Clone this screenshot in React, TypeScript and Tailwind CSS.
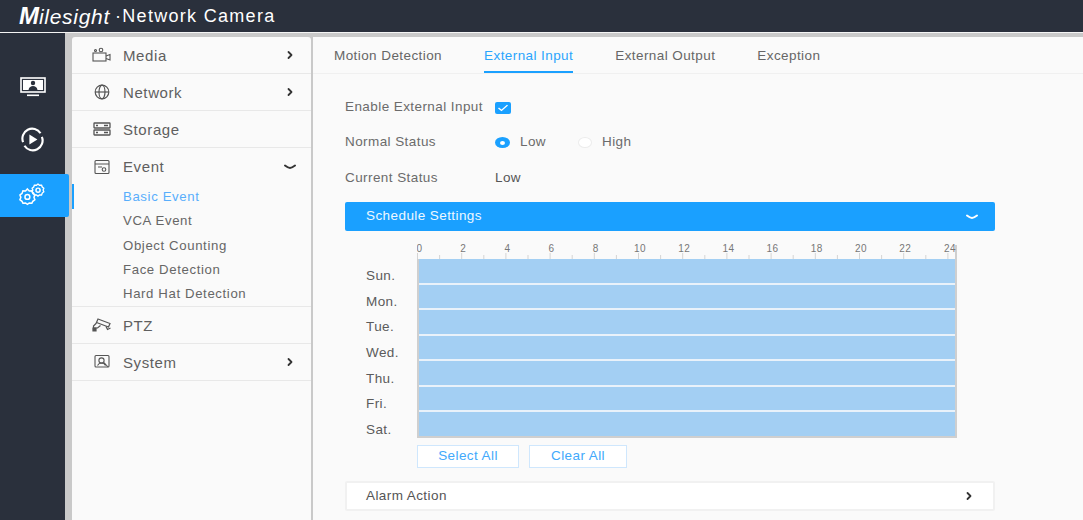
import { ChevronRight } from "lucide-react"

const font = "[font-family:'Liberation_Sans',Arial,sans-serif]"

function MediaIcon() {
  return (
    <svg width="20" height="16" viewBox="0 0 20 16" fill="none" stroke="#555" strokeWidth="1.1">
      <rect x="1" y="6" width="13" height="8" />
      <path d="M14 9l4-1.5V13l-4-1.5" />
      <circle cx="9" cy="3" r="1.8" />
      <circle cx="3.5" cy="3.5" r="1" />
    </svg>
  )
}

function GlobeIcon() {
  return (
    <svg width="18" height="18" viewBox="0 0 18 18" fill="none" stroke="#555" strokeWidth="1.2">
      <circle cx="9" cy="9" r="6.8" />
      <ellipse cx="9" cy="9" rx="3" ry="6.8" />
      <path d="M2 9h14" />
    </svg>
  )
}

function StorageIcon() {
  return (
    <svg width="18" height="14" viewBox="0 0 18 14" fill="none" stroke="#555" strokeWidth="1.3">
      <rect x="1" y="1" width="16" height="5" rx="0.5" />
      <rect x="1" y="8" width="16" height="5" rx="0.5" />
      <path d="M3 3.5h2M3 10.5h2M11 3.5h4M11 10.5h4" />
    </svg>
  )
}

function EventIcon() {
  return (
    <svg width="18" height="16" viewBox="0 0 18 16" fill="none" stroke="#555" strokeWidth="1.1">
      <rect x="2" y="1.5" width="14" height="13" rx="1" />
      <path d="M2 5h14M5 8h4" />
      <circle cx="11" cy="10.5" r="1.8" />
    </svg>
  )
}

function PtzIcon() {
  return (
    <svg width="20" height="14" viewBox="0 0 20 14" fill="none" stroke="#555" strokeWidth="1.2">
      <path d="M6 1L18 5.5 16.5 9 4.5 4.5z" />
      <path d="M14 8.5l1.5 3 3-1.5M4.5 5L1.5 8v4.5M1.5 10h4l3-2.5" />
      <path d="M1 10h3v3H1z" fill="#555" />
    </svg>
  )
}

function SystemIcon() {
  return (
    <svg width="18" height="16" viewBox="0 0 18 16" fill="none" stroke="#555" strokeWidth="1.1">
      <rect x="2" y="1.5" width="14" height="11.5" rx="1" />
      <circle cx="8.5" cy="6.5" r="2.6" />
      <path d="M4.5 11.5c1-2 3-2.5 4-2.5s3 .5 4 2.5M11 8.5l4 4.5" />
    </svg>
  )
}

function LiveIcon() {
  return (
    <svg width="26" height="20" viewBox="0 0 26 20" fill="none">
      <rect x="1" y="1" width="24" height="14" stroke="#fff" strokeWidth="1.6" />
      <rect x="3" y="3" width="20" height="10" fill="#fff" />
      <circle cx="13" cy="6" r="2.2" fill="#2a303c" />
      <path d="M8.5 13c.5-3 2.5-4 4.5-4s4 1 4.5 4z" fill="#2a303c" />
      <rect x="7" y="17.5" width="12" height="1.6" fill="#fff" />
    </svg>
  )
}

function PlaybackIcon() {
  return (
    <svg width="25" height="25" viewBox="0 0 28 28" fill="none" stroke="#fff" strokeWidth="2.4">
      <path d="M3.5 17A11 11 0 0 1 23 7M24.5 11A11 11 0 0 1 5 21" />
      <path d="M10.5 8.5l9 5.5-9 5.5z" fill="#fff" stroke="none" />
    </svg>
  )
}

function GearsIcon() {
  return (
    <svg width="28" height="25" viewBox="0 0 30 26" fill="none" stroke="#fff" strokeWidth="1.6">
      <path d="M9 9l2 2.2 2.8-.2 1 2.8 2.2 1.7-1 2.5 1 2.5-2.2 1.7-1 2-2.8-.2L9 25.5l-2-1.5-2.8.2-1-2-2.2-1.7 1-2.5-1-2.5 2.2-1.7 1-2.8 2.8.2z" transform="translate(0 -3)" />
      <circle cx="9" cy="14.5" r="2.6" />
      <path d="M21 1l1.8 1.4 2.4-.1.8 2.2 1.8 1.4-.8 2.1.8 2.1-1.8 1.4-.8 2.2-2.4-.1L21 15l-1.8-1.4-2.4.1-.8-2.2-1.8-1.4.8-2.1-.8-2.1 1.8-1.4.8-2.2 2.4.1z" transform="translate(1 -.2) scale(.92)" />
      <circle cx="20.4" cy="7.3" r="2.2" />
    </svg>
  )
}

// flat chevron used for the open sections
function OpenChevron({ color }: { color: string }) {
  return (
    <svg width="12" height="6" viewBox="0 0 12 6" fill="none" stroke={color} strokeWidth="2" strokeLinecap="round">
      <path d="M1 1.5c2 1.5 3.5 2.5 5 2.5s3-1 5-2.5" />
    </svg>
  )
}

function Ruler() {
  const hours = Array.from({ length: 25 }, (_, i) => i)
  return (
    <svg width="542" height="17" viewBox="0 0 542 17" className="block">
      {hours.map((h) => (
        <line key={h} x1={h * 22.1 + 0.5} x2={h * 22.1 + 0.5} y1={h % 2 === 0 ? 11 : 13} y2="17" stroke="#d4d4d4" />
      ))}
      <line x1="539" x2="539" y1="3" y2="17" stroke="#cfcfcf" strokeWidth="2" />
      {hours
        .filter((h) => h % 2 === 0)
        .map((h) => (
          <text key={h} x={h === 0 ? 2.5 : h === 24 ? 533 : h * 22.1 + 2} y="9.5" fontSize="10" fill="#777" textAnchor="middle" fontFamily="Liberation Sans">
            {h}
          </text>
        ))}
    </svg>
  )
}

const days = ["Sun.", "Mon.", "Tue.", "Wed.", "Thu.", "Fri.", "Sat."]
const subItems = ["Basic Event", "VCA Event", "Object Counting", "Face Detection", "Hard Hat Detection"]
const tabs = ["Motion Detection", "External Input", "External Output", "Exception"]

function MenuRow({ icon, label, arrow }: { icon: React.ReactNode; label: string; arrow?: boolean }) {
  return (
    <div className="flex h-[37px] items-center border-b border-[#e8e8e8] pr-[15px]">
      <span className="flex w-[51px] shrink-0 justify-end pr-[11px]">
        <span className="flex w-5 justify-center">{icon}</span>
      </span>
      <span className="flex-1 pt-[3px] text-[15px] tracking-[0.6px] text-[#5f5f5f]">{label}</span>
      {arrow && <ChevronRight size={12} strokeWidth={3.6} className="text-[#333]" />}
    </div>
  )
}

export default function App() {
  return (
    <div className={`${font} flex h-[520px] w-[1083px] flex-col overflow-hidden bg-[#c9c9c9]`}>
      {/* Header */}
      <header className="flex h-[32px] shrink-0 items-center bg-[#2a303c] pl-[19px] text-white">
        <span className="flex w-[93px] items-baseline whitespace-nowrap italic">
          <span className="text-[24px] leading-none font-bold">M</span>
          <span className="text-[21px] leading-none tracking-[0.7px]">ilesight</span>
        </span>
        <span className="ml-[3px] text-[18px] tracking-[1.3px]">·Network Camera</span>
      </header>
      <div className="h-px shrink-0 bg-[#f4f4f4]" />

      <div className="flex min-h-0 flex-1 pt-[4px]">
        {/* Icon rail */}
        <aside className="relative -mt-[4px] flex w-[65px] shrink-0 flex-col items-center bg-[#2a303c] pt-[41px]">
          <div className="flex h-[26px] items-center justify-center">
            <LiveIcon />
          </div>
          <div className="mt-[25px] flex h-[28px] items-center justify-center">
            <PlaybackIcon />
          </div>
          <div className="absolute left-0 top-[141px] z-10 flex h-[43px] w-[69px] items-center justify-center rounded-r-[2px] bg-[#1aa0ff] pr-[3px]">
            <GearsIcon />
          </div>
        </aside>

        {/* Sidebar */}
        <nav className="relative ml-[7px] w-[239px] shrink-0 rounded-t-[3px] bg-[#fafafa]">
          <MenuRow icon={<MediaIcon />} label="Media" arrow />
          <MenuRow icon={<GlobeIcon />} label="Network" arrow />
          <MenuRow icon={<StorageIcon />} label="Storage" />
          <div className="border-b border-[#e8e8e8]">
            <div className="flex h-[37px] items-center pr-[15px]">
              <span className="flex w-[51px] shrink-0 justify-end pr-[11px]">
                <span className="flex w-5 justify-center"><EventIcon /></span>
              </span>
              <span className="flex-1 pt-[2px] text-[15px] tracking-[0.6px] text-[#5f5f5f]">Event</span>
              <OpenChevron color="#333" />
            </div>
            <ul>
              {subItems.map((item, i) => (
                <li key={item} className={`flex h-[24.2px] items-center pl-[51px] text-[13.2px] tracking-[0.62px] ${i === 0 ? "text-[#58aefc]" : "text-[#666]"}`}>
                  {item}
                </li>
              ))}
            </ul>
          </div>
          <MenuRow icon={<PtzIcon />} label="PTZ" />
          <MenuRow icon={<SystemIcon />} label="System" arrow />
          <div className="absolute left-0 top-[147px] h-[25px] w-[2px] bg-[#1aa0ff]" />
        </nav>

        {/* Main content */}
        <main className="ml-[2px] min-w-0 flex-1 bg-[#fafafa]">
          <div className="flex h-[37px] gap-[42px] border-b border-[#f0f0f0] pl-[21px]">
            {tabs.map((tab) => (
              <div
                key={tab}
                className={`flex items-center border-b-2 pt-[4px] text-[13.5px] tracking-[0.42px] ${tab === "External Input" ? "border-[#1aa0ff] text-[#2aa5fd]" : "border-transparent text-[#666]"}`}
              >
                {tab}
              </div>
            ))}
          </div>

          <div className="w-[682px] pl-[32px] text-[13.5px] tracking-[0.42px] text-[#6b6b6b]">
            <div className="mt-[16px] flex h-[35px] items-center">
              <span className="w-[150px] shrink-0">Enable External Input</span>
              <span className="flex h-[12px] w-[16px] items-center justify-center rounded-[2px] bg-[#1aa0ff]">
                <svg width="12" height="8" viewBox="0 0 12 10" preserveAspectRatio="none" fill="none" stroke="#fff" strokeWidth="1.4">
                  <path d="M1.5 5l3 3 6-6.5" />
                </svg>
              </span>
            </div>
            <div className="flex h-[35px] items-center">
              <span className="w-[150px] shrink-0">Normal Status</span>
              <span className="flex h-[11px] w-[15px] items-center justify-center rounded-[50%] bg-[#1aa0ff]">
                <span className="h-[4px] w-[5px] rounded-[50%] bg-white" />
              </span>
              <span className="ml-[10px] w-[58px]">Low</span>
              <span className="h-[11px] w-[14px] rounded-[50%] border border-[#ececec] bg-white" />
              <span className="ml-[10px]">High</span>
            </div>
            <div className="flex h-[36px] items-center">
              <span className="w-[150px] shrink-0">Current Status</span>
              <span className="text-[#555]">Low</span>
            </div>

            <div className="mt-[6px] flex h-[29px] items-center justify-between rounded-[2px] bg-[#1aa0ff] pr-[17px] pl-[21px] font-medium text-[#eef8ff]">
              <span className="text-[13.5px]">Schedule Settings</span>
              <OpenChevron color="#fff" />
            </div>

            {/* Schedule grid */}
            <div className="flex pt-[11px]">
              <ul className="w-[72px] shrink-0 pt-[21.5px] pl-[21px]">
                {days.map((day) => (
                  <li key={day} className="flex h-[25.6px] items-center text-[#5b5b5b]">
                    {day}
                  </li>
                ))}
              </ul>
              <div>
                <Ruler />
                <div className="flex h-[179px] w-[540px] flex-col gap-[2px] border-r-2 border-b-2 border-l-2 border-[#cfcfcf] bg-[#e9f2fa]">
                  {days.map((day) => (
                    <div key={day} className="flex-1 bg-[#a3cff3]" />
                  ))}
                </div>
                <div className="mt-[7px] flex gap-[10px] text-[13.5px] text-[#42a9fb]">
                  <button className="h-[23px] w-[102px] border border-[#cfe7fd] bg-white">Select All</button>
                  <button className="h-[23px] w-[98px] border border-[#cfe7fd] bg-white">Clear All</button>
                </div>
              </div>
            </div>

            <div className="mt-[13px] flex h-[30px] items-center justify-between rounded-[2px] border-2 border-[#f1f1f1] bg-white pr-[18px] pl-[19px] text-[#555]">
              <span>Alarm Action</span>
              <ChevronRight size={12} strokeWidth={3.6} className="text-[#333]" />
            </div>
          </div>
        </main>
      </div>
    </div>
  )
}
